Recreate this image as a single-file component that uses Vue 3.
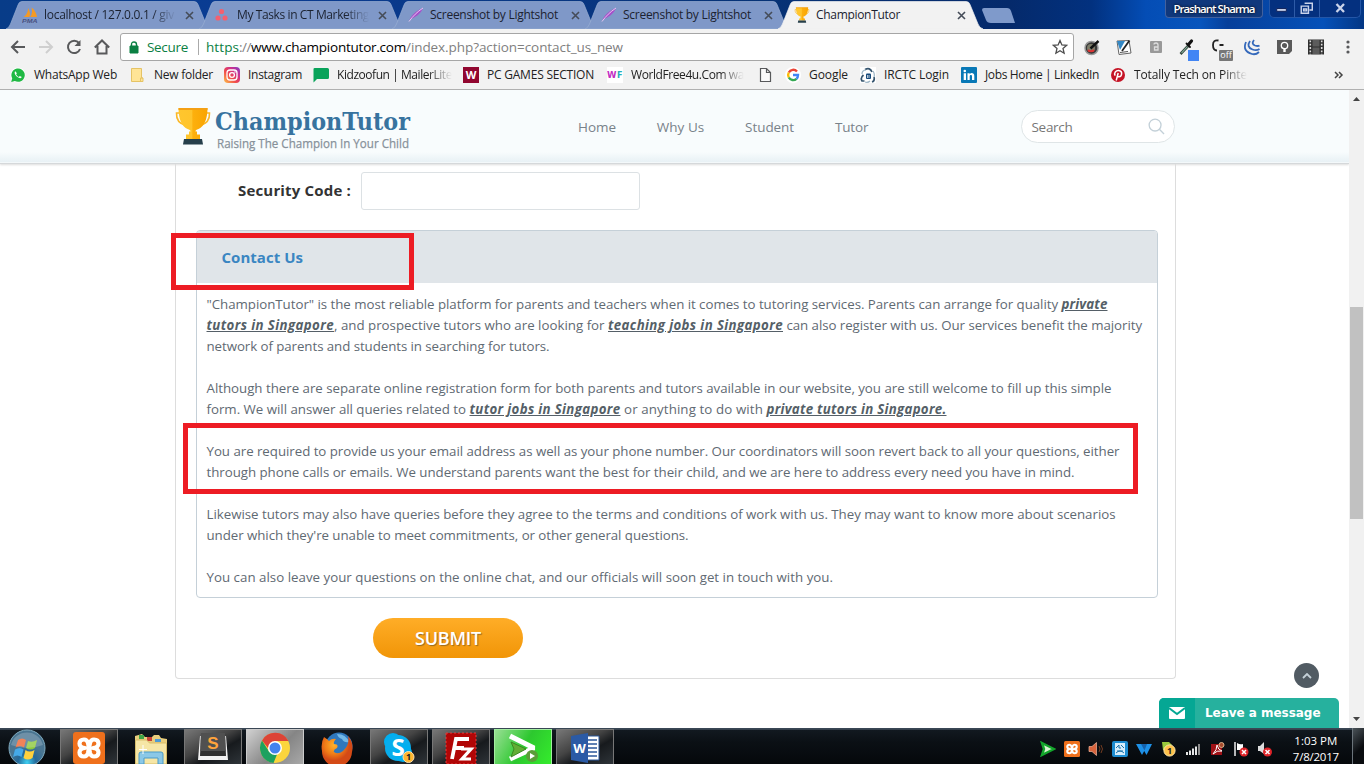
<script setup>
const vFit = (el, { value }) => {
  if (!value) return
  el.style.letterSpacing = '0px'
  const natural = el.getBoundingClientRect().width
  el.style.letterSpacing = `${(value - natural) / el.textContent.length}px`
}

const tabs = [
  { icon: 'pma', title: 'localhost / 127.0.0.1 / giv', w: 130, fade: true },
  { icon: 'asana', title: 'My Tasks in CT Marketing', w: 132, fade: true },
  { icon: 'feather', title: 'Screenshot by Lightshot', w: 128 },
  { icon: 'feather', title: 'Screenshot by Lightshot', w: 128 },
  { icon: 'cup', title: 'ChampionTutor', w: 84, active: true },
]

const bookmarks = [
  { icon: 'whatsapp', title: 'WhatsApp Web', w: 83, slot: 120 },
  { icon: 'folder', title: 'New folder', w: 59, slot: 94 },
  { icon: 'instagram', title: 'Instagram', w: 54, slot: 89 },
  { icon: 'mailer', title: 'Kidzoofun | MailerLite', w: 115, slot: 150, fade: true },
  { icon: 'wbox', title: 'PC GAMES SECTION', w: 107, slot: 144 },
  { icon: 'wf', title: 'WorldFree4u.Com wa', w: 113, slot: 150, fade: true },
  { icon: 'page', title: '', w: 0, slot: 28 },
  { icon: 'google', title: 'Google', w: 39, slot: 75 },
  { icon: 'irctc', title: 'IRCTC Login', w: 65, slot: 101 },
  { icon: 'linkedin', title: 'Jobs Home | LinkedIn', w: 114, slot: 149 },
  { icon: 'pinterest', title: 'Totally Tech on Pinte', w: 113, slot: 138, fade: true },
]

const extensions = ['dial', 'note', 'lock', 'dropper', 'coff', 'waves', 'bulb', 'film']

const nav = [
  { t: 'Home', w: 38 },
  { t: 'Why Us', w: 47.5 },
  { t: 'Student', w: 49 },
  { t: 'Tutor', w: 33.5 },
]

const paragraphs = [
  [
    [{ t: '"ChampionTutor" is the most reliable platform for parents and teachers when it comes to tutoring services. Parents can arrange for quality ', w: 855 }, { t: 'private', w: 46, b: true }],
    [{ t: 'tutors in Singapore', w: 127.5, b: true }, { t: ', and prospective tutors who are looking for ', w: 274 }, { t: 'teaching jobs in Singapore', w: 175, b: true }, { t: ' can also register with us. Our services benefit the majority', w: 359 }],
    [{ t: 'network of parents and students in searching for tutors.', w: 343 }],
  ],
  [
    [{ t: 'Although there are separate online registration form for both parents and tutors available in our website, you are still welcome to fill up this simple', w: 905 }],
    [{ t: 'form. We will answer all queries related to ', w: 263 }, { t: 'tutor jobs in Singapore', w: 151, b: true }, { t: ' or anything to do with ', w: 146 }, { t: 'private tutors in Singapore.', w: 180, b: true }],
  ],
  [
    [{ t: 'You are required to provide us your email address as well as your phone number. Our coordinators will soon revert back to all your questions, either', w: 913 }],
    [{ t: 'through phone calls or emails. We understand parents want the best for their child, and we are here to address every need you have in mind.', w: 868 }],
  ],
  [
    [{ t: 'Likewise tutors may also have queries before they agree to the terms and conditions of work with us. They may want to know more about scenarios', w: 909 }],
    [{ t: "under which they're unable to meet commitments, or other general questions.", w: 482 }],
  ],
  [[{ t: 'You can also leave your questions on the online chat, and our officials will soon get in touch with you.', w: 626.5 }]],
]

const apps = [
  { icon: 'xampp', kind: 'open' },
  { icon: 'explorer', kind: '' },
  { icon: 'sublime', kind: 'open' },
  { icon: 'chrome', kind: 'open current' },
  { icon: 'firefox', kind: '' },
  { icon: 'skype', kind: 'open' },
  { icon: 'filezilla', kind: 'open' },
  { icon: 'player', kind: 'open green' },
  { icon: 'word', kind: 'open' },
]
const tray = ['play', 'xampps', 'horn', 'fx', 'bluew', 'one', 'signal', 'pdf', 'flag', 'mute']
</script>

<template>
  <div class="screen">
    <svg class="defs" width="0" height="0" aria-hidden="true">
      <defs>
        <linearGradient id="gold"><stop offset="0" stop-color="#ffc62e" /><stop offset=".45" stop-color="#ffc42b" /><stop offset=".5" stop-color="#fdb00d" /><stop offset="1" stop-color="#f9a400" /></linearGradient>
        <linearGradient id="insta" x1="0" y1="1" x2="1" y2="0"><stop offset="0" stop-color="#fdc14b" /><stop offset=".4" stop-color="#f04a4b" /><stop offset=".7" stop-color="#cc2f8e" /><stop offset="1" stop-color="#7a3fc9" /></linearGradient>
        <radialGradient id="orb" cx=".5" cy=".9"><stop offset="0" stop-color="#3fd0f2" /><stop offset=".5" stop-color="#24699a" /><stop offset="1" stop-color="#4a7591" /></radialGradient>
        <radialGradient id="fox" cx=".4" cy=".3"><stop offset="0" stop-color="#ffb22b" /><stop offset=".6" stop-color="#f07b17" /><stop offset="1" stop-color="#d44a16" /></radialGradient>

        <symbol id="i-cup" viewBox="0 0 36 38">
          <path d="M5 6H1.500Q1 16 11 18.500M31 6h3.500Q35 16 25 18.500" fill="none" stroke="#fcb827" stroke-width="1.600" />
          <path d="M3.500 1h29c0 12-4 19-9 21-2 1-3 1-3 2.500h1.500v3h3v4.500H11v-4.500h3v-3h1.500C15.500 23 14.500 23 12.500 22 7.500 20 3.500 13 3.500 1z" fill="url(#gold)" />
          <path d="M3.500 1h29v2H3.500z" fill="#f4a014" />
          <path d="M9 32h18l1 5.500H8z" fill="#263f4b" />
        </symbol>
        <symbol id="i-pma" viewBox="0 0 16 16">
          <path d="M1.500 10C5 8 6 4 6 1c2 3 2.500 6 1.500 9zM8 10c2-2 2.500-6 1.500-9.500 3 2 5 6 5.500 9.500z" fill="#f59a23" />
          <text x="0" y="15.500" font-size="6" font-family="Liberation Sans" font-weight="700" font-style="italic" fill="#4a5280" textLength="15.500" lengthAdjust="spacingAndGlyphs">PMA</text>
        </symbol>
        <symbol id="i-asana" viewBox="0 0 16 16"><g fill="#f4606f"><circle cx="6.500" cy="4.500" r="2.600" /><circle cx="3" cy="11" r="2.600" /><circle cx="10" cy="11" r="2.600" /></g></symbol>
        <symbol id="i-feather" viewBox="0 0 16 16"><path d="M1.500 13C4 7 9 3.500 15 1c-1.500 4-5 8-11 10.500z" fill="#a64fc9" /><path d="M1 14.500C5 9 9 5 15 1" stroke="#e6c6f2" fill="none" stroke-width="1" /></symbol>
        <symbol id="i-whatsapp" viewBox="0 0 16 16"><circle cx="8" cy="8" r="7.500" fill="#fff" /><path d="M1.200 15l1-3.600A6.700 6.700 0 1 1 4.800 14z" fill="#20b944" /><path d="M5.300 4.200c-1.600 1.500.2 4.400 2.200 5.900 2 1.400 3.700 1.500 4.300 0l-2-1.200-1 1C7.500 9.400 6.600 8.300 6.100 7.200l.8-1z" fill="#fff" /></symbol>
        <symbol id="i-folder" viewBox="0 0 16 16"><path d="M1.500 1.500h10v9.500H13v3.500H1.500z" fill="#ffe496" stroke="#e5c365" /><path d="M10.500 14.500V11H13" fill="none" stroke="#e5c365" /></symbol>
        <symbol id="i-instagram" viewBox="0 0 16 16"><rect width="16" height="16" rx="4" fill="url(#insta)" /><rect x="3" y="3" width="10" height="10" rx="3" fill="none" stroke="#fff" stroke-width="1.300" /><circle cx="8" cy="8" r="2.400" fill="none" stroke="#fff" stroke-width="1.300" /><circle cx="11" cy="5" r=".8" fill="#fff" /></symbol>
        <symbol id="i-mailer" viewBox="0 0 16 16"><path d="M1.500 1h13Q16 1 16 2.500v8Q16 12 14.500 12H4l-3.500 3.500V2.500Q.2 1 1.500 1z" fill="#09a35a" /></symbol>
        <symbol id="i-wbox" viewBox="0 0 16 16"><path d="M0 0h16v16H0z" fill="#91062f" /><text x="8" y="12" text-anchor="middle" font-size="11" font-weight="700" font-family="Open Sans" fill="#fff">W</text></symbol>
        <symbol id="i-wf" viewBox="0 0 16 16"><path d="M0 0h16v16H0z" fill="#fff" /><text x="0" y="11" font-size="9" font-weight="700" font-family="DejaVu Sans" fill="#c32dc2" textLength="9.500" lengthAdjust="spacingAndGlyphs">W</text><text x="10" y="11" font-size="9" font-weight="700" font-family="DejaVu Sans" fill="#24afb8" textLength="5.500" lengthAdjust="spacingAndGlyphs">F</text></symbol>
        <symbol id="i-page" viewBox="0 0 16 16"><path d="M3.500 1.500h6l4 4v9h-10zM9.500 1.500v4h4" fill="#fafafa" stroke="#58595b" stroke-width="1.200" /></symbol>
        <symbol id="i-google" viewBox="0 0 16 16"><circle cx="8" cy="8" r="8" fill="#fff" /><g fill="none" stroke-width="2.400"><path d="M12 4.500A5 5 0 0 0 3.800 5.500" stroke="#ea4335" /><path d="M3.800 5.500a5 5 0 0 0 0 5" stroke="#fbbc05" /><path d="M3.800 10.500a5 5 0 0 0 7.700 1.300" stroke="#34a853" /><path d="M8 8h5q0 2.400-1.500 3.800" stroke="#4285f4" /></g></symbol>
        <symbol id="i-irctc" viewBox="0 0 16 16"><path d="M0 0h16v16H0z" fill="#fff" /><path d="M5 2.500Q10 0 12 5M14 10q1 4-2 5M3.500 8Q0 11 2 14h2.500" fill="none" stroke="#36556f" stroke-width="1.700" /><path d="M2 7q0-4 4-4M13 4q2 3 1 6M5 15q3 1 5-1" stroke="#9cb5c5" fill="none" stroke-width="1.200" /><rect x="6" y="6.500" width="5" height="5.500" rx="1" fill="#174a7b" /><path d="M7.500 8v3M9 8v3" stroke="#fff" stroke-width=".7" /></symbol>
        <symbol id="i-linkedin" viewBox="0 0 16 16"><rect width="16" height="16" rx="1" fill="#0878b6" /><path d="M2.700 6.300H5V13H2.700zM6.500 6.300h2.200v1c1.300-2 4.600-1.500 4.600 1.700v4H11V9.500c0-2-2.300-1.700-2.300 0V13H6.500z" fill="#fff" /><circle cx="3.800" cy="4" r="1.300" fill="#fff" /></symbol>
        <symbol id="i-pinterest" viewBox="0 0 16 16"><circle cx="8" cy="8" r="7" fill="#c51325" /><path d="M6.200 13.500l2-7.500M5.200 8.600C3.500 6 6 3.300 8.700 3.500c4.500.4 3.300 6.300.2 6.200-.9 0-1.400-.5-1.400-.5" fill="none" stroke="#fff" stroke-width="1.500" /></symbol>

        <symbol id="i-dial" viewBox="0 0 18 18"><circle cx="8.500" cy="10" r="6.500" fill="#383838" stroke="#999" stroke-width="1.500" /><circle cx="8" cy="10" r="4" fill="#7d7d6a" /><path d="M5 12a4 4 0 0 0 6 0" stroke="#d33" fill="none" stroke-width="2" /><path d="M7.500 10.500L15.500 3" stroke="#111" stroke-width="2.400" /></symbol>
        <symbol id="i-note" viewBox="0 0 18 18"><path d="M2 3l12-.5 2 12.500-12 1.500z" fill="#fff" stroke="#666" /><path d="M2 3h8L5 12z" fill="#3387c4" /><path d="M14.500 2.500L7 13" stroke="#222" stroke-width="1.800" /><path d="M5 14.500l8-1" stroke="#555" stroke-width="1.200" /></symbol>
        <symbol id="i-lock" viewBox="0 0 18 18"><rect x="3" y="3" width="12" height="12" rx="1" fill="#999" /><path d="M7 6.500Q7 5 9 5t2 2v5H7.500V9H11" fill="none" stroke="#ddd" stroke-width="1.300" /></symbol>
        <symbol id="i-dropper" viewBox="0 0 18 18"><path d="M1.500 16L9.500 7.500" stroke="#33443b" stroke-width="2.600" /><path d="M2.500 15l6-6.500" stroke="#8bb8a4" stroke-width="1.100" /><path d="M7.500 5.500l3.500 3.500" stroke="#111" stroke-width="1.800" stroke-linecap="round" /><path d="M9.500 6.500l3-3.500" stroke="#111" stroke-width="3.200" stroke-linecap="round" /></symbol>
        <symbol id="i-coff" viewBox="0 0 18 18"><path d="M7.500 2.500Q2 1.500 2 7t4 5.500M8.500 7h4" fill="none" stroke="#222" stroke-width="1.800" /></symbol>
        <symbol id="i-waves" viewBox="0 0 18 18"><path d="M3 4Q-1 13 9 16q4 1 7-2M7 3Q3 9 9.500 11.500q4 1.500 7-.5M11 2Q8 6 12 7.500q3 1 4.500 0" fill="none" stroke="#3569bb" stroke-width="1.800" /></symbol>
        <symbol id="i-bulb" viewBox="0 0 18 18"><path d="M2 2h15v11l-3 3H2z" fill="#5a5a5a" /><circle cx="9.500" cy="7.500" r="3.200" fill="none" stroke="#fff" stroke-width="1.300" /><path d="M8.300 11v3h2.400v-3z" fill="#fff" /></symbol>
        <symbol id="i-film" viewBox="0 0 18 18"><path d="M1 1.500h16v15H1z" fill="#303030" /><path d="M5.500 2h7v6.500h-7zM5.500 9.500h7V16h-7z" fill="#5c5c5c" /><path d="M3.300 2.500v14M14.700 2.500v14" stroke="#ddd" stroke-width="1.600" stroke-dasharray="1.800 1.500" /></symbol>

        <symbol id="i-xampp" viewBox="0 0 32 32"><rect width="32" height="32" rx="3" fill="#ef701c" /><path d="M12 16Q6.500 15.500 6.500 11.500T11 7.500q3 0 4 3.500l1 5 1-5q1-3.500 4-3.500 4.500 0 4.500 4T20 16q5.500.5 5.500 4.500t-4.500 4q-3 0-4-3.500l-1-5-1 5q-1 3.500-4 3.500-4.500 0-4.500-4T12 16z" fill="none" stroke="#fff" stroke-width="4.200" stroke-linejoin="round" /></symbol>
        <symbol id="i-explorer" viewBox="0 0 32 32"><path d="M0 4l7-2 3 3h7l2-2h5l2 3 6 1v25H0z" fill="#e9ce7d" /><path d="M4 3h5v4H4z" fill="#3fa446" /><path d="M12 5h5v4h-5z" fill="#c94336" /><path d="M20 7h6v3h-6z" fill="#4d9bd5" /><path d="M.5 8h11l3 3h17v21H.5z" fill="#f6e6a6" stroke="#d7bd6a" /><path d="M4 32V22q0-2 2-2h20q2 0 2 2v10h-5v-6H9v6z" fill="#8bc8e7" stroke="#4a9bc9" /><path d="M8 13v9M4 17.500h8" stroke="#fff" stroke-width="1" /></symbol>
        <symbol id="i-sublime" viewBox="0 0 32 32"><path d="M3 4h26l2 24H1z" fill="#f2f2f2" /><path d="M4 1h24l1 23H3z" fill="#303030" /><path d="M4 1h24l.5 18h-25z" fill="#505050" /><text x="16" y="16.500" text-anchor="middle" font-size="17" font-weight="700" font-family="Liberation Sans" fill="#ffa33c">S</text></symbol>
        <symbol id="i-chrome" viewBox="0 0 32 32"><circle cx="16" cy="16" r="15" fill="#fbd53d" /><path d="M3 8.500A15 15 0 0 1 29.500 9H16l-7 7z" fill="#dc4437" /><path d="M3 8.500l7 11 8 3L14.500 31A15 15 0 0 1 3 8.500z" fill="#1ca15f" /><circle cx="16" cy="16" r="7" fill="#fff" /><circle cx="16" cy="16" r="5.500" fill="#4383ee" /></symbol>
        <symbol id="i-firefox" viewBox="0 0 32 32"><circle cx="18" cy="14" r="13.500" fill="#2f78bd" /><path d="M16 2q9 0 12 8-5 1-7-3-4-1-5-5z" fill="#74b9e7" /><path d="M3 5q3 2 5 4 3-3 7-2-3 3-2 5 5 0 3 4-4 2-3 4 4 3 9-1 7-6 5-15 6 7 4 16a15 15 0 0 1-30-1Q-.5 11 3 5z" fill="url(#fox)" /></symbol>
        <symbol id="i-skype" viewBox="0 0 32 32"><circle cx="10" cy="10" r="9" fill="#00aff0" /><circle cx="15" cy="16" r="13" fill="#08adec" /><circle cx="20" cy="21" r="9" fill="#00aff0" /><text x="15" y="24" text-anchor="middle" font-size="24" font-weight="700" font-family="Open Sans" fill="#fff">S</text><circle cx="25.500" cy="25" r="5.500" fill="#ffb52f" stroke="#fae1b0" /><text x="25.500" y="28.300" text-anchor="middle" font-size="9" font-weight="700" font-family="Open Sans" fill="#222">1</text></symbol>
        <symbol id="i-filezilla" viewBox="0 0 32 32"><path d="M1 1h30v31H1z" fill="#b10606" stroke="#e04040" stroke-dasharray="2 2" /><path d="M7 27l4-20h13M9 16h10" fill="none" stroke="#fff" stroke-width="3.800" /><path d="M16 17h10l-9 10h9" fill="none" stroke="#fff" stroke-width="3.200" /></symbol>
        <symbol id="i-player" viewBox="0 0 32 32"><path d="M3 4l24 12L3 27" fill="none" stroke="#fff" stroke-width="5" stroke-linejoin="bevel" /><path d="M4 10l15 7L4 25l3-8z" fill="#62ad35" stroke="#398b20" /><circle cx="25" cy="24" r="6" fill="#5a9d38" /><path d="M23 21l5 3-5 3z" fill="#fff" /></symbol>
        <symbol id="i-word" viewBox="0 0 32 32"><path d="M16 4h14v24H16z" fill="#fff" stroke="#2b579a" /><path d="M19 8h9M19 12h9M19 16h9M19 20h9M19 24h9" stroke="#2b579a" stroke-width="1.500" /><path d="M2 4l17-3v30L2 28z" fill="#2b5aa5" /><text x="10.500" y="21" text-anchor="middle" font-size="13" font-weight="700" font-family="Open Sans" fill="#fff">W</text></symbol>

        <symbol id="i-play" viewBox="0 0 16 16"><path d="M2 2l12 6-12 6 2-6z" fill="#d8f3d2" stroke="#13a52b" stroke-width="2.400" /></symbol>
        <symbol id="i-xampps" viewBox="0 0 32 32"><use href="#i-xampp" /></symbol>
        <symbol id="i-horn" viewBox="0 0 16 16"><path d="M1 5.500h3l4.500-4v13l-4.500-4H1z" fill="#d8643d" stroke="#f0b49c" stroke-width=".7" /><path d="M11 5q2 3 0 6M13 4q3 4 0 8" stroke="#733b20" fill="none" /></symbol>
        <symbol id="i-fx" viewBox="0 0 16 16"><rect width="16" height="16" rx="2" fill="#1d8cd0" /><path d="M3 2h10v12H3z" fill="#d7eefb" /><path d="M4 7l3-3v3h2M9 4l3 3M4 12q4-4 8 0M5 10h6" stroke="#1872aa" fill="none" /></symbol>
        <symbol id="i-bluew" viewBox="0 0 16 16"><path d="M0 3h16l-5.500 11L8.200 10 6 14z" fill="#1e91e8" /><path d="M5 3h6L8.500 9.500z" fill="#1562ac" /></symbol>
        <symbol id="i-one" viewBox="0 0 16 16"><path d="M2 1h7l3 3-3 6-6-1z" fill="#99c93c" /><circle cx="9.500" cy="9.500" r="5.600" fill="#ffc24b" stroke="#ffe6a8" /><text x="9.500" y="12.800" text-anchor="middle" font-size="9" font-family="Open Sans" font-weight="700" fill="#222">1</text></symbol>
        <symbol id="i-signal" viewBox="0 0 16 16"><path d="M2 11v3M5 9.500V14M8 7.500V14M11 5.500V14" stroke="#fff" stroke-width="1.800" /><path d="M14 3v11" stroke="#999" stroke-width="1.800" /></symbol>
        <symbol id="i-pdf" viewBox="0 0 16 16"><path d="M2 3h11v11H2z" fill="#9f1116" /><path d="M4 13q4-4 4-9 1 5 5 6-5-1-9 3" fill="none" stroke="#fff" /><circle cx="12.500" cy="4" r="2.500" fill="#a54b2c" stroke="#ddb38d" /></symbol>
        <symbol id="i-flag" viewBox="0 0 16 16"><path d="M2 1v14" stroke="#eee" stroke-width="1.500" /><path d="M4 2q3 2 6 1v6H4z" fill="#fff" /><circle cx="11" cy="11" r="4.500" fill="#df2328" /><path d="M9 9l4 4M13 9l-4 4" stroke="#fff" stroke-width="1.500" /></symbol>
        <symbol id="i-mute" viewBox="0 0 16 16"><path d="M1 5h2l4-4v12L3 10H1z" fill="#ddd" /><circle cx="10.500" cy="11" r="4.500" fill="#df2328" /><path d="M8.500 9l4 4M12.500 9l-4 4" stroke="#fff" stroke-width="1.500" /></symbol>
      </defs>
    </svg>

    <div class="titlebar">
      <div v-for="(tab, i) in tabs" :key="i" class="tab" :class="{ active: tab.active }">
        <svg class="tab-shape" viewBox="0 0 205 29"><path d="M0 29Q3 28 4.500 24L12 5Q13 1.500 16 1.500H188Q191 1.500 192 4.500L200 24Q201.500 28 205 29z" /></svg>
        <svg class="icon16"><use :href="'#i-' + tab.icon" /></svg>
        <span class="tab-title" :class="{ fade: tab.fade }"><span v-fit="tab.w" class="txt">{{ tab.title }}</span></span>
        <svg class="close" viewBox="0 0 9 9"><path d="M1 1l7 7M8 1L1 8" /></svg>
      </div>
      <svg class="newtab" viewBox="0 0 36 18"><path d="M3 1h23q3 0 4 3l4 12H10q-4 0-5-3L1 3q0-2 2-2z" /></svg>
      <div class="user"><span v-fit="81" class="txt">Prashant Sharma</span></div>
      <div class="winbtns">
        <svg class="wb" viewBox="0 0 25 17"><path d="M7 8.500h10v3H7z" fill="#c5cfe8" stroke="#11235a" /></svg>
        <svg class="wb" viewBox="0 0 25 17"><path d="M10 3h8v7h-3M6.500 6h7.500v7.500H6.500zM9 9h3v2H9z" fill="none" stroke="#cad3ea" stroke-width="1.500" /></svg>
        <svg class="wb wide" viewBox="0 0 40 17"><path d="M16.500 4l7.500 8M24 4l-7.500 8" fill="none" stroke="#cad3ea" stroke-width="2.300" /></svg>
      </div>
    </div>

    <div class="toolbar">
      <svg class="navicon" viewBox="0 0 16 16"><path d="M15 8H2M8 2L2 8l6 6" stroke="#58595b" /></svg>
      <svg class="navicon" viewBox="0 0 16 16"><path d="M1 8h13M8 2l6 6-6 6" stroke="#cfcfcf" /></svg>
      <svg class="navicon" viewBox="0 0 16 16"><path d="M13 4A6.200 6.200 0 1 0 14 10" stroke="#58595b" /><path class="solid" d="M14.500 1v6h-6z" /></svg>
      <svg class="navicon" viewBox="0 0 16 16"><path d="M.8 8.500L8 1.500l7.200 7M3.500 7v7.500h9V7" stroke="#58595b" /></svg>
      <div class="omnibox">
        <svg class="padlock" viewBox="0 0 10 13"><path d="M1 5h8v7H1z" fill="#0b8043" stroke="#0b8043" /><path d="M2.500 5V3.500q0-2.500 2.500-2.500t2.500 2.500V5" fill="none" stroke="#0b8043" stroke-width="1.400" /></svg>
        <span v-fit="41" class="secure">Secure</span><i class="sep"></i>
        <span v-fit="33" class="https">https</span><span v-fit="12" class="grey">://</span><span v-fit="155" class="host">www.championtutor.com</span><span v-fit="217" class="grey">/index.php?action=contact_us_new</span>
        <svg class="star" viewBox="0 0 16 16"><path d="M8 1.500l1.900 4.400 4.800.4L11 9.500l1.100 4.700L8 11.700l-4.100 2.500L5 9.500 1.300 6.300l4.800-.4z" /></svg>
      </div>
      <div class="exts">
        <div v-for="e in extensions" :key="e" class="ext">
          <svg class="icon18"><use :href="'#i-' + e" /></svg>
          <i v-if="e === 'dropper'" class="swatch"></i>
          <b v-if="e === 'coff'" class="off">off</b>
        </div>
      </div>
      <svg class="dots" viewBox="0 0 4 14"><circle cx="2" cy="2" r="1.600" /><circle cx="2" cy="7" r="1.600" /><circle cx="2" cy="12" r="1.600" /></svg>
    </div>

    <div class="bookmarks">
      <div v-for="b in bookmarks" :key="b.icon" class="bm" :style="{ width: b.slot + 'px' }">
        <svg class="icon16"><use :href="'#i-' + b.icon" /></svg>
        <span v-if="b.title" v-fit="b.w" class="bm-title" :class="{ fade: b.fade }">{{ b.title }}</span>
      </div>
      <svg class="more" viewBox="0 0 10 8"><path d="M1 1l3 3-3 3M5 1l3 3-3 3" /></svg>
    </div>

    <div class="viewport">
      <div class="page">
        <header class="site-head">
          <svg class="cup"><use href="#i-cup" /></svg>
          <svg class="brand" viewBox="0 0 210 52">
            <text x="0" y="25" class="brand-name" textLength="195" lengthAdjust="spacingAndGlyphs">ChampionTutor</text>
            <text x="2" y="42.500" class="brand-tag" textLength="192" lengthAdjust="spacingAndGlyphs">Raising The Champion In Your Child</text>
          </svg>
          <nav class="menu"><a v-for="n in nav" :key="n.t"><span v-fit="n.w" class="txt">{{ n.t }}</span></a></nav>
          <div class="search"><span v-fit="41" class="txt">Search</span><svg viewBox="0 0 18 18"><circle cx="7.500" cy="7.500" r="6.300" /><path d="M12 12l5 5" /></svg></div>
        </header>
        <main class="card">
          <div class="field"><label><span v-fit="113" class="txt">Security Code :</span></label><div class="input"></div></div>
          <section class="panel">
            <h2><span v-fit="81.5" class="txt">Contact Us</span></h2>
            <div class="copy">
              <p v-for="(p, pi) in paragraphs" :key="pi">
                <span v-for="(line, li) in p" :key="li" class="line"><span v-for="(s, si) in line" :key="si" v-fit="s.w" :class="{ link: s.b }">{{ s.t }}</span></span>
              </p>
            </div>
          </section>
          <div class="submit"><span v-fit="66" class="txt">SUBMIT</span></div>
        </main>
        <div class="mark mark-title"></div>
        <div class="mark mark-text"></div>
        <div class="totop"><svg viewBox="0 0 10 6"><path d="M1 5l4-4 4 4" /></svg></div>
        <div class="chat">
          <div class="mail"><svg viewBox="0 0 16 12"><rect width="16" height="12" rx="1" fill="#fff" /><path d="M0 1l8 6 8-6" fill="none" stroke="#05a794" stroke-width="2" /></svg></div>
          <span v-fit="115.5" class="chat-label">Leave a message</span>
        </div>
      </div>
      <div class="scroll">
        <svg viewBox="0 0 7 4"><path d="M0 4L3.500 0 7 4z" /></svg>
        <div class="thumb"></div>
        <svg class="down" viewBox="0 0 7 4"><path d="M0 0h7L3.500 4z" /></svg>
      </div>
    </div>

    <div class="taskbar">
      <svg class="start" viewBox="0 0 38 38">
        <circle cx="19" cy="19" r="18" fill="url(#orb)" stroke="#7fa9bd" />
        <path d="M10 11q4-3 8 0l-2 7.500q-4-3-8.500 0z" fill="#ef6530" /><path d="M20 12q4 2 9-1l-2 8q-5 3-9 0z" fill="#8cc83c" />
        <path d="M7 20.500q5-3 8.500 0l-2 7.500q-4-3-8.500 0z" fill="#45a9e8" /><path d="M17.500 21q4 3 9 0l-2 8q-5 3-9 0z" fill="#ffd13c" />
        <path d="M3 16A16.500 16.500 0 0 1 35 16Q19 22 3 16z" fill="#fff" opacity=".2" />
      </svg>
      <div class="apps"><div v-for="a in apps" :key="a.icon" class="app" :class="a.kind"><svg class="icon32"><use :href="'#i-' + a.icon" /></svg></div></div>
      <div class="tray"><svg v-for="t in tray" :key="t" class="icon16"><use :href="'#i-' + t" /></svg></div>
      <div class="clock"><span v-fit="43">1:03 PM</span><span v-fit="46">7/8/2017</span></div>
      <div class="desk"></div>
    </div>
  </div>
</template>

<style>
body { margin: 0; overflow: hidden; }
</style>

<style scoped>
.screen { width: 1364px; height: 764px; display: flex; flex-direction: column; overflow: hidden; background: #fff; font-family: "Open Sans", "Noto Sans", sans-serif; font-size: 12px; color: #222; }
.screen * { box-sizing: border-box; }
svg { display: block; flex: none; }
.defs { position: absolute; }
span { white-space: pre; }
.txt { display: inline-block; }
.icon16 { width: 16px; height: 16px; }
.icon18 { width: 18px; height: 18px; }
.icon32 { width: 32px; height: 32px; }
.fade { -webkit-mask-image: linear-gradient(90deg, #000 calc(100% - 24px), transparent); mask-image: linear-gradient(90deg, #000 calc(100% - 24px), transparent); }

.titlebar { flex: none; height: 29px; display: flex; padding-left: 6px; background: linear-gradient(90deg, #083c88 0, #0a3c94 18%, #063173 60%, #052a6b 74%, #02317f 80%, #044db5 84%, #0755bd 88%, #063f9a 90%, #0551b9 97%, #033684 100%); }
.tab { position: relative; width: 205px; margin-right: -12px; height: 29px; display: flex; align-items: center; padding: 1px 0 0 16px; flex: none; }
.tab-shape { position: absolute; left: 0; top: 0; width: 205px; height: 29px; }
.tab-shape path { fill: #7f98c8; stroke: #9aafd3; stroke-width: .7; }
.tab.active .tab-shape path { fill: #f2f2f2; stroke: #f2f2f2; }
.tab .icon16 { position: relative; }
.tab-title { position: relative; width: 132px; height: 18px; line-height: 17px; margin-left: 6px; overflow: hidden; color: #1b2230; }
.close { position: relative; width: 9px; height: 9px; margin-left: 8.5px; }
.close path { stroke: #454c58; stroke-width: 1.600; }
.newtab { width: 36px; height: 18px; margin: 7px 0 0 10px; }
.newtab path { fill: #7f9acb; }
.user { width: 98px; height: 18px; margin-left: 148px; border: 1px solid #43619d; border-top: 0; border-radius: 0 0 4px 4px; color: #fff; font-size: 11.5px; font-weight: 600; line-height: 17px; text-align: center; text-shadow: 0 0 3px #000; background: #10387c; flex: none; }
.winbtns { display: flex; height: 18px; margin-left: 6px; border: 1px solid #2456a7; border-top: 0; border-radius: 0 0 5px 5px; background: #04307f; flex: none; }
.wb { width: 25px; height: 17px; border-right: 1px solid #2e5ba7; }
.wb.wide { width: 40px; border: 0; }

.toolbar { flex: none; height: 33px; display: flex; align-items: center; padding: 3px 0 0 10px; background: #f2f2f2; }
.navicon { width: 16px; height: 16px; margin-right: 12px; }
.navicon path { fill: none; stroke-width: 2; }
.navicon .solid { fill: #58595b; }
.omnibox { width: 954px; height: 28px; margin-left: -2px; border: 1px solid #a6a6a6; border-radius: 3px; background: #fff; display: flex; align-items: center; padding-left: 8px; font-size: 13.5px; line-height: 24px; flex: none; }
.padlock { width: 10px; height: 13px; margin-right: 8px; }
.secure, .https { color: #0b8043; }
.sep { width: 1px; height: 16px; background: #aaa; margin: 0 7px 0 10px; }
.grey { color: #808080; }
.host { color: #000; }
.star { width: 16px; height: 16px; margin-left: auto; margin-right: 5px; }
.star path { fill: none; stroke: #4d4d4d; stroke-width: 1.300; }
.exts { display: flex; gap: 14px; margin-left: 9px; }
.ext { position: relative; width: 18px; height: 18px; }
.swatch { position: absolute; left: 9px; top: 12px; width: 11px; height: 11px; background: #4285f4; }
.off { position: absolute; left: 8px; top: 12px; width: 14px; height: 11px; background: #777; color: #fff; font-size: 9px; line-height: 10px; text-align: center; border-radius: 1px; font-weight: 400; }
.dots { width: 4px; height: 14px; margin-left: 21px; fill: #58595b; }
.bookmarks { flex: none; height: 28px; background: #f2f2f2; border-bottom: 1px solid #b0b0b0; display: flex; align-items: center; padding: 0 0 2px 10px; }
.bm { display: flex; align-items: center; flex: none; }
.bm-title { margin-left: 8px; line-height: 16px; }
.more { width: 10px; height: 8px; margin-left: 86px; }
.more path { fill: none; stroke: #444; stroke-width: 1.500; }

.viewport { flex: none; height: 638px; display: flex; }
.page { position: relative; width: 1349px; height: 638px; overflow: hidden; }
.site-head { position: relative; z-index: 1; height: 74px; display: flex; align-items: flex-start; padding-left: 175px; background: linear-gradient(#f8fcfd 0, #f8fcfd 62px, #e8f1f5 72px, #fff 73px); border-bottom: 1px solid #d5d8da; box-shadow: 0 1px 2px #ddd; }
.cup { width: 36px; height: 38px; margin-top: 17px; }
.brand { width: 210px; height: 52px; margin: 15px 0 0 4px; overflow: visible; }
.brand-name { font: 700 25px "DejaVu Serif", serif; fill: #37739f; }
.brand-tag { font: 400 13px "Open Sans", sans-serif; fill: #87919a; stroke: #87919a; stroke-width: .25; }
.menu { display: flex; gap: 40.8px; width: 433px; padding: 28px 0 0 153px; font-size: 13.5px; line-height: 19px; color: #78828a; flex: none; }
.search { width: 154px; height: 33px; margin: 20px 0 0 163px; padding: 0 9px 0 9.5px; border: 1px solid #dfe5e7; border-radius: 17px; background: #fff; display: flex; align-items: center; justify-content: space-between; font-size: 13.5px; color: #777; flex: none; }
.search svg { width: 17px; height: 17px; fill: none; stroke: #c3d0d8; stroke-width: 1.400; }
.card { display: flow-root; width: 1001px; height: 515px; margin-left: 175px; border: 1px solid #ddd; border-top: 0; border-radius: 0 0 4px 4px; }
.field { display: flex; align-items: center; height: 38px; margin-top: 8px; }
.field label { width: 185px; padding: 0 0 2px 62px; font-size: 15px; font-weight: 700; color: #333; }
.input { width: 279px; height: 38px; border: 1px solid #dce1e4; border-radius: 3px; }
.panel { width: 962px; height: 368px; margin: 20px 0 0 20px; border: 1px solid #c5d0d8; border-radius: 4px; overflow: hidden; }
.panel h2 { height: 52px; margin: 0; padding-left: 24.5px; background: #e0e5e9; color: #3a86c2; font-size: 15px; line-height: 53px; font-weight: 700; }
.copy { padding: 11px 0 0 9.5px; font-size: 13.3px; line-height: 21px; color: #5f6a73; }
.copy p { margin: 0 0 21px; }
.line { display: block; height: 21px; }
.link { font-weight: 700; font-style: italic; text-decoration: underline; color: #555f67; }
.submit { width: 150px; height: 40px; margin: 20px 0 0 197px; border-radius: 20px; background: linear-gradient(#ffad27, #f19507); color: #fff; font-size: 18px; line-height: 40px; font-weight: 600; text-align: center; text-shadow: 1px 1px 1px #9a6a20; }
.mark { position: absolute; z-index: 2; border: 5px solid #ed1c24; }
.mark-title { left: 171px; top: 143px; width: 243px; height: 57px; }
.mark-text { left: 183px; top: 333px; width: 955px; height: 71px; }
.totop { position: absolute; left: 1294px; top: 573px; width: 25px; height: 25px; border-radius: 50%; background: #515b63; display: flex; align-items: center; justify-content: center; }
.totop svg { width: 10px; height: 6px; fill: none; stroke: #c4d0d8; stroke-width: 1.800; }
.chat { position: absolute; right: 10px; bottom: 0; width: 180px; height: 30px; border-radius: 5px 5px 0 0; background: #26b19e; display: flex; align-items: center; overflow: hidden; }
.mail { width: 36px; height: 30px; display: flex; align-items: center; justify-content: center; background: #05a794; margin-right: 10px; }
.mail svg { width: 16px; height: 12px; }
.chat-label { color: #fff; font: 700 12px "DejaVu Sans", sans-serif; }
.scroll { width: 15px; height: 638px; background: #f1f1f1; display: flex; flex-direction: column; align-items: center; padding-top: 7px; }
.scroll svg { width: 7px; height: 4px; fill: #444; }
.thumb { width: 13px; height: 212px; margin-top: 206px; background: #c1c1c1; }
.scroll .down { margin-top: 198px; }

.taskbar { flex: none; height: 36px; display: flex; align-items: flex-start; background: linear-gradient(#1b2530 0, #58697a 1px, #121920 2px, #0b1015 14px, #05080b 100%); overflow: hidden; }
.start { width: 38px; height: 38px; margin: 1px 14px 0 8px; }
.apps { display: flex; gap: 4px; margin-top: 1px; }
.app { width: 58px; height: 38px; display: flex; justify-content: center; padding-top: 2px; border: 1px solid transparent; }
.open { border-color: #777; background: linear-gradient(150deg, #777 0, #444 40%, #171a1d 60%, #30363b 100%); }
.current { border-color: #ccc; background: linear-gradient(135deg, #d0d0d0, #858585 55%, #aaa); }
.green { border-color: #a3efa0; background: linear-gradient(120deg, #99df95, #2dc82f 50%, #35ed2c); }
.tray { display: flex; gap: 8.100px; margin: 13px 0 0 426px; }
.clock { width: 66px; margin-left: 10px; padding-top: 5px; display: flex; flex-direction: column; align-items: center; color: #fff; line-height: 16px; font-size: 11.5px; }
.desk { width: 12px; height: 36px; margin-left: auto; border-left: 1px solid #6b747b; background: linear-gradient(135deg, #4b5359, #090c0f 60%); }
</style>
